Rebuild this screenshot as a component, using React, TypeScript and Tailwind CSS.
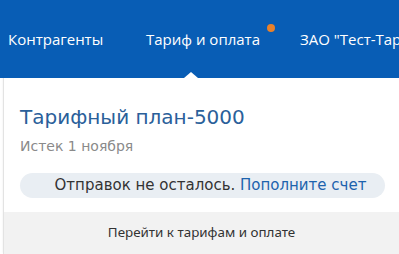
import React from "react";

export default function App() {
  return (
    <div className="w-[399px] h-[254px] overflow-hidden bg-white relative" style={{ fontFamily: '"DejaVu Sans", sans-serif' }}>
      <div className="h-[78px] bg-[#085db5] flex items-center whitespace-nowrap text-white text-[15px] relative" style={{ fontFamily: '"Open Sans", sans-serif' }}>
        <div className="pl-[8px] w-[146px] shrink-0">Контрагенты</div>
        <div className="w-[154px] shrink-0 relative">
          Тариф и оплата
          <span className="absolute left-[121px] top-[-4px] w-[8px] h-[8px] rounded-full bg-[#e9812a]" />
        </div>
        <div className="shrink-0">ЗАО "Тест-Тариф"</div>
        <div className="absolute left-[184px] bottom-0 w-0 h-0 border-l-[7px] border-r-[7px] border-b-[6px] border-l-transparent border-r-transparent border-b-white" />
      </div>
      <div className="ml-[3px] border-l border-[#e3e3e3] h-[176px] flex flex-col shadow-[0_-1px_2px_rgba(0,0,0,0.08)]">
        <div className="pl-[16px] pr-[14px] pt-[25px] flex-1">
          <div className="text-[20px] leading-[28px] text-[#2a609a]">Тарифный план-5000</div>
          <div className="text-[14px] leading-[20px] text-[#8a8a8a] mt-[5px]">Истек 1 ноября</div>
          <div className="mt-[17px] h-[25px] rounded-full bg-[#e9eef3] flex items-center justify-center text-[15px] text-[#333] pl-[16px]">
            Отправок не осталось.&nbsp;<span className="text-[#1d63ad]">Пополните счет</span>
          </div>
        </div>
        <div className="h-[42px] bg-[#f2f2f2] flex items-center justify-center text-[13.4px] text-[#333] pb-[2px]" style={{ fontFamily: '"Noto Sans", sans-serif' }}>
          Перейти к тарифам и оплате
        </div>
      </div>
    </div>
  );
}
